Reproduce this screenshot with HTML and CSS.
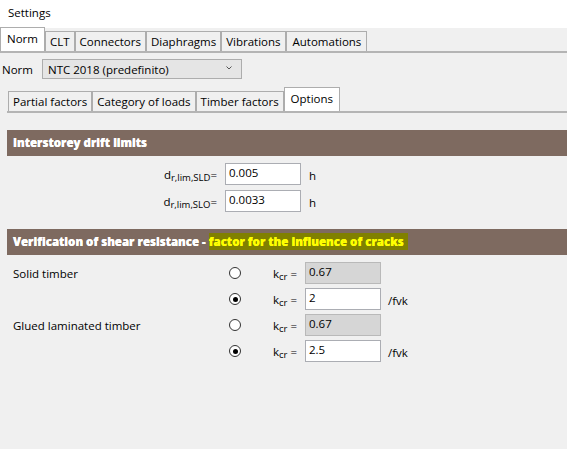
FILE: index.html
```html
<!DOCTYPE html>
<html>
<head>
<meta charset="utf-8">
<title>Settings</title>
<link rel="stylesheet" href="styles.css">
</head>
<body>
<div class="title">Settings</div>
<div class="window">
  <div class="tabs">
    <div class="tab active">Norm</div>
    <div class="tab">CLT</div>
    <div class="tab">Connectors</div>
    <div class="tab">Diaphragms</div>
    <div class="tab">Vibrations</div>
    <div class="tab wide">Automations</div>
  </div>
  <div class="norm-row">
    <span class="norm-label">Norm</span>
    <div class="combo">
      <span>NTC 2018 (predefinito)</span>
      <svg class="chev" width="6" height="4" viewBox="0 0 6 4"><path d="M0.5 0.5 L3 3 L5.5 0.5" fill="none" stroke="#555" stroke-width="1"/></svg>
    </div>
  </div>
  <div class="tabs subtabs">
    <div class="tab">Partial factors</div>
    <div class="tab">Category of loads</div>
    <div class="tab">Timber factors</div>
    <div class="tab active">Options</div>
  </div>

  <div class="section first">
    <div class="sec-head">Interstorey drift limits</div>
    <div class="drift">
      <span class="dlabel">d<sub>r,lim,SLD</sub>=</span>
      <div class="input">0.005</div>
      <span class="unit">h</span>
      <span class="dlabel">d<sub>r,lim,SLO</sub>=</span>
      <div class="input">0.0033</div>
      <span class="unit">h</span>
    </div>
  </div>

  <div class="section second">
    <div class="sec-head">Verification of shear resistance - <span class="hl">factor for the influence of cracks</span></div>
    <div class="kcr">
      <span class="rlabel">Solid timber</span>
      <span class="radio"></span>
      <span class="klabel">k<sub>cr</sub> =</span>
      <div class="input disabled">0.67</div>
      <span class="unit"></span>

      <span class="rlabel"></span>
      <span class="radio checked"></span>
      <span class="klabel">k<sub>cr</sub> =</span>
      <div class="input">2</div>
      <span class="unit">/fvk</span>

      <span class="rlabel">Glued laminated timber</span>
      <span class="radio"></span>
      <span class="klabel">k<sub>cr</sub> =</span>
      <div class="input disabled">0.67</div>
      <span class="unit"></span>

      <span class="rlabel"></span>
      <span class="radio checked"></span>
      <span class="klabel">k<sub>cr</sub> =</span>
      <div class="input">2.5</div>
      <span class="unit">/fvk</span>
    </div>
  </div>
</div>
</body>
</html>
```
FILE: styles.css
```css
html, body {
  margin: 0;
  padding: 0;
}
body {
  width: 567px;
  height: 449px;
  overflow: hidden;
  background: #f0f0f0;
  font-family: "Open Sans", "Noto Sans", sans-serif;
  font-size: 11.5px;
  color: #000;
}
.title {
  background: #fff;
  height: 28px;
  line-height: 26px;
  padding-left: 8px;
  box-sizing: border-box;
}
.tabs {
  display: flex;
  align-items: flex-end;
  height: 23px;
  border-bottom: 2px solid #b4b4b4;
}
.tab {
  height: 20px;
  box-sizing: border-box;
  border: 1px solid #adadad;
  border-bottom: 0;
  padding: 0 4px;
  line-height: 19px;
  background: #f0f0f0;
  white-space: nowrap;
}
.tab.wide {
  padding: 0 5px 0 6px;
}
.tab.active {
  height: 24px;
  background: #fff;
  padding: 0 6px;
  line-height: 22px;
}
.norm-row {
  display: flex;
  align-items: center;
  margin-top: 6px;
  height: 20px;
}
.norm-label {
  width: 42px;
  padding-left: 2px;
  box-sizing: border-box;
}
.combo {
  width: 200px;
  height: 20px;
  box-sizing: border-box;
  border: 1px solid #adadad;
  background: #e5e5e5;
  display: flex;
  align-items: center;
  justify-content: space-between;
  padding: 0 9px 0 5px;
}
.chev {
  display: block;
  margin-top: -2px;
}
.subtabs {
  margin: 9px 0 0 7px;
  padding-left: 1px;
}
.section {
  margin-left: 7px;
}
.section.first {
  margin-top: 17px;
}
.section.second {
  margin-top: 17px;
}
.sec-head {
  height: 26px;
  background: #7e6a60;
  color: #fff;
  font-weight: 800;
  font-size: 11.5px;
  line-height: 26px;
  padding-left: 6px;
  white-space: nowrap;
  text-shadow: 0 0 0.4px #fff;
}
.hl {
  background: #808000;
  color: #ffff00;
  padding: 1px 4px 1px 0;
  text-shadow: 0 0 0.4px #ffff00;
}
.drift {
  display: grid;
  grid-template-columns: 210px 76px auto;
  column-gap: 8px;
  row-gap: 5px;
  margin-top: 7px;
  align-items: center;
}
.dlabel {
  text-align: right;
}
sub {
  font-size: 9.5px;
  vertical-align: -2px;
  line-height: 0;
}
.input {
  height: 22px;
  box-sizing: border-box;
  border: 1px solid #abadb3;
  background: #fff;
  padding-left: 3px;
  line-height: 18px;
}
.input.disabled {
  background: #d6d6d6;
  border-color: #b9b9b9;
}
.unit {
  padding-top: 3px;
}
.kcr {
  display: grid;
  grid-template-columns: 222px 12px 64px 76px auto;
  row-gap: 4px;
  margin-top: 7px;
  align-items: center;
}
.rlabel {
  padding-left: 6px;
}
.radio {
  width: 12px;
  height: 12px;
  box-sizing: border-box;
  border: 1px solid #333;
  border-radius: 50%;
  background: #fff;
  position: relative;
}
.radio.checked::after {
  content: "";
  position: absolute;
  left: 2.5px;
  top: 2.5px;
  width: 5px;
  height: 5px;
  border-radius: 50%;
  background: #000;
}
.klabel {
  padding-left: 32px;
}
.kcr .unit {
  padding-left: 7px;
}
```
